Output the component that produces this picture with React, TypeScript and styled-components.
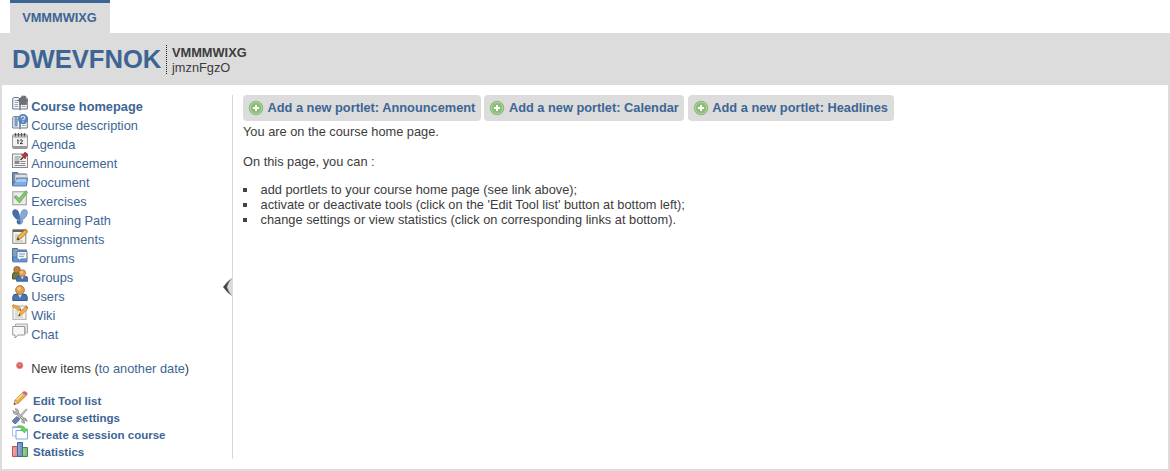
import React from "react";
import styled, { createGlobalStyle } from "styled-components";

const BLUE = "#3d6594";
const GREY = "#dcdcdc";

const GlobalStyle = createGlobalStyle`
  * { box-sizing: border-box; }
  body {
    margin: 0;
    background: #fff;
    color: #3c3c3c;
    font: 12.8px/15px "Liberation Sans", Arial, sans-serif;
  }
  a { color: ${BLUE}; text-decoration: none; }
`;

const Page = styled.div`
  display: flex;
  flex-direction: column;
  height: 471px;
  width: 1170px;
`;
const TabBar = styled.nav`
  display: flex;
  flex: none;
  height: 33px;
  padding-left: 10px;
`;
const Tab = styled.a`
  width: 100px;
  border-top: 3px solid ${BLUE};
  background: ${GREY};
  padding-right: 1px;
  text-align: center;
  font-weight: bold;
  line-height: 29px;
`;
const Banner = styled.header`
  display: flex;
  flex: none;
  height: 52px;
  padding: 12px 0 0 12px;
  background: ${GREY};
`;
const Title = styled.h1`
  margin: 0;
  width: 154px;
  font-size: 25.6px;
  line-height: 28px;
  color: ${BLUE};
  white-space: nowrap;
`;
const CourseInfo = styled.div`
  height: 29px;
  border-left: 1px dotted #222;
  padding-left: 5px;
  white-space: nowrap;
`;
const Frame = styled.main`
  flex: 1;
  display: flex;
  border: 2px solid ${GREY};
  border-top: 0;
  padding: 10px;
`;
const Sidebar = styled.aside`
  flex: none;
  width: 221px;
`;
const Divider = styled.div`
  position: relative;
  flex: none;
  width: 1px;
  margin-left: -1px;
  background: #d8d8d8;
`;
const Collapse = styled.svg`
  position: absolute;
  right: 0;
  top: 182px;
`;
const ToolRow = styled.a<{ $active?: boolean }>`
  display: flex;
  gap: 3.2px;
  height: 19px;
  line-height: 23px;
  white-space: nowrap;
  font-weight: ${(p) => (p.$active ? "bold" : "normal")};
`;
const NewItems = styled.p`
  display: flex;
  margin: 19px 0 15px;
  height: 15px;
  white-space: pre;
`;
const NewDot = styled.svg`
  margin-right: 3.2px;
`;
const AdminRow = styled.a`
  display: flex;
  gap: 5px;
  height: 17px;
  font-size: 11.52px;
  font-weight: bold;
  line-height: 21px;
  white-space: nowrap;
`;
const Icon = styled.svg`
  flex: none;
  width: 16px;
  height: 16px;
`;
const Content = styled.section`
  flex: 1;
  padding-left: 10px;
`;
const Portlets = styled.div`
  display: flex;
`;
const PortletButton = styled.a<{ $w: number }>`
  display: flex;
  align-items: center;
  width: ${(p) => p.$w}px;
  height: 26px;
  margin-right: 3.4px;
  padding: 0 0 1px 5px;
  border-radius: 4px;
  background: ${GREY};
  font-weight: bold;
  white-space: nowrap;
  gap: 3.5px;
`;
const Text = styled.p`
  margin: 3px 0 15px;
`;
const List = styled.ul`
  list-style: none;
  margin: -2px 0 0;
  padding: 0;
`;
const Item = styled.li`
  display: flex;
  align-items: center;
  gap: 13.6px;
  &::before {
    content: "";
    width: 4px;
    height: 4px;
    background: #444;
  }
`;

const book = (
  <>
    <path d="M.7 3.5 2 2.5h4.5L8 4l1.500-1.500H14l1.300 1V14H9.500L8 15l-1.500-1H.7z" fill="#f5f6f7" stroke="#68788c" />
    <path d="M8 4v10" stroke="#54708f" strokeWidth="1.500" />
    <path d="M2.500 5.500h3.500M2.500 7.500h3.500M2.500 9.500h3.500M2.500 11.500h3.500M10 9.500h3.500M10 11.500h3.500" stroke="#9aa5b2" />
  </>
);
const person = (
  <>
    <path d="M.8 15.500V12q0-3 3.700-3h7q3.700 0 3.700 3v3.500z" fill="#4a74b0" stroke="#34588e" />
    <path d="m6 9 2 4 2-4z" fill="#e4edf8" />
    <circle cx="8" cy="5" r="4.400" fill="#e5a04d" stroke="#a9662a" strokeWidth=".8" />
    <circle cx="7" cy="3.800" r="1.800" fill="#f5c98b" />
  </>
);
const pencil = (
  <>
    <path d="m5 12 1-3.500L13 1.500 15.500 4l-7 7z" fill="#f2b545" stroke="#8f6428" strokeWidth=".8" />
    <path d="m5 12 .8-2.400 1.700 1.700z" fill="#3b3027" />
  </>
);

const icons: Record<string, React.ReactNode> = {
  home: (
    <>
      {book}
      <path d="M6 5.200 10.800.5 12 1.700V1h1.500v2.200L16 5.500V6h-1.500v3.500H8V6H6z" fill="#707070" stroke="#5c5c5c" strokeWidth=".5" />
    </>
  ),
  description: (
    <>
      {book}
      <path d="M2.500 2.500h3v10h-3z" fill="#7c9cc5" />
      <circle cx="11" cy="5" r="4.700" fill="#5e88c2" stroke="#3f66a0" strokeWidth=".6" />
      <path d="M9.200 4q0-1.800 1.800-1.800T12.800 4Q12.700 5 11 5.500v.8M11 7.200v1.200" fill="none" stroke="#dce8f8" strokeWidth="1.100" />
    </>
  ),
  agenda: (
    <>
      <rect x=".5" y="1.500" width="15" height="14" rx="1" fill="#f2f2f2" stroke="#999" />
      <path d="M1 2h14v3H1z" fill="#c4c4c4" />
      <path d="M3.500 0v3.500M6.500 0v3.500M9.500 0v3.500M12.500 0v3.500" stroke="#555" strokeWidth="1.300" />
      <path d="M1 13h14v2.500H1z" fill="#999" />
      <path d="m5 7.500 1-.7V11M8 7.600q0-.8 1.200-.8t1.200 1Q10.300 8.800 8 10.600h2.800" fill="none" stroke="#333" />
    </>
  ),
  announcement: (
    <>
      <rect x=".5" y="2" width="15" height="13.500" fill="#f4f4f4" stroke="#888" />
      <path d="M2.500 5h7M2.500 7h5M8.500 9.500h5M8.500 11.500h5M2.500 13.500h11" stroke="#888" />
      <path d="M2.500 8.500h5v3.500h-5z" fill="#8a8a8a" />
      <path d="m8.500 8 3-3" stroke="#333" strokeWidth="1.300" />
      <path d="m9.500 2.800 2-.3L13 0l3 2.800-2.200 2-.5 2.200z" fill="#c92c32" stroke="#7c2024" strokeWidth=".6" />
    </>
  ),
  document: (
    <>
      <path d="M.5 14V1.500h5l1 1.500h8v11z" fill="#7890ae" stroke="#526e90" />
      <path d="M3 3.500h12V10H3z" fill="#e0e0e0" stroke="#999" strokeWidth=".6" />
      <path d="M4.500 7h11l-1 8H.5l1.500-4h2z" fill="#82ace0" stroke="#426fa9" strokeWidth=".8" />
      <path d="M5 8h9.500L14 11H3z" fill="#a9c8ee" />
    </>
  ),
  exercises: (
    <>
      <rect x=".8" y="1.800" width="13.500" height="13" fill="#ececec" stroke="#999" />
      <path d="m2 7 2.200-1.500L7 8.500 13.800.7l1.900 1.500L7.500 13z" fill="#83cb6c" stroke="#509c47" strokeWidth=".7" />
    </>
  ),
  path: (
    <>
      <path d="M.5 3.500Q.5.500 3.500.5q3 0 4 6l.6 4H5Q.8 7.500.5 3.500zM5 11.500h3.100q1 2.500-.5 3.700-1.800.4-2.600-1.700z" fill="#456fa8" stroke="#315a91" strokeWidth=".5" />
      <path d="M15.500 3Q15.200.5 12.500.5 9 .5 8.500 6.500l-.2 4H11q4.500-3 4.500-7.500zM8.300 11.500h2.700q-.2 3-2.500 3.800z" fill="#86a9d7" stroke="#456fa8" strokeWidth=".5" />
    </>
  ),
  assignments: (
    <>
      <rect x=".8" y="2" width="13" height="13.300" fill="#f5f4ef" stroke="#88847b" />
      <path d="M1 1.500h13V4H1z" fill="#686660" />
      <path d="M3 7h4M3 9h3M3 11h2M3 13h8" stroke="#b7b5ae" />
      {pencil}
      <path d="m12.500 2 1.200-1.200L16 3l-1.200 1.300z" fill="#d7812c" />
    </>
  ),
  forums: (
    <>
      <path d="M.5 14V1.500h5l1 1.500h8v11z" fill="#829dbe" stroke="#4e709b" />
      <path d="M1 10h14v5H1z" fill="#6797d1" stroke="#426fa9" strokeWidth=".7" />
      <path d="M5 4.500h10V12H9l-2.500 2V12H5z" fill="#f1f5fa" stroke="#597eaa" />
      <path d="M7 7h6M7 9.300h5" stroke="#8a9bb0" />
    </>
  ),
  groups: (
    <>
      <path d="M.5 13V9q0-3 3-3h4v7z" fill="#6d7b42" stroke="#4f5b30" />
      <circle cx="5" cy="3.700" r="3.300" fill="#b98342" stroke="#7e5429" strokeWidth=".7" />
      <g transform="translate(4 3.200) scale(.78)">{person}</g>
    </>
  ),
  users: person,
  wiki: (
    <>
      <rect x="1" y="2" width="13" height="13.300" fill="#f5f5f5" stroke="#aaa" />
      <path d="M3 7h4M3 9h3M3 11h3M3 13h8" stroke="#c2c2c2" />
      <path d="M0 2 1.500.5l6.500 3 1 3-3-.3z" fill="#f1ad45" stroke="#bd7124" strokeWidth=".6" />
      <path d="m6.500 12 1-3 6-6.500L16 4.500 9.500 11z" fill="#f2b545" stroke="#bd7124" strokeWidth=".7" />
      <path d="m6.500 12 .7-2 1.400 1.200zM9 6.500l-1.500-.2.8-1.200z" fill="#42352a" />
      <path d="m13 3 1.200-1.500L16 3v1.700z" fill="#d66b4c" />
    </>
  ),
  chat: (
    <>
      <path d="M3.500 1h12v9H13V4H3.500z" fill="#e8e8e8" stroke="#aaa" />
      <path d="M.7 3.500h12V12H6l-3 3v-3H.7z" fill="#f7f7f7" stroke="#999" />
    </>
  ),
  edit: (
    <>
      <path d="m2 13.500 1.200-4.500 7.500-7.500 3.500 3-7.700 7.500z" fill="#f3ae40" stroke="#a96c29" strokeWidth=".7" />
      <path d="m4.500 9 6.500-6.500" stroke="#ffe098" strokeWidth="1.300" />
      <path d="m2 13.500 1.100-4 3 2.600z" fill="#f2d7a6" stroke="#a98458" strokeWidth=".5" />
      <path d="m2 13.500.5-1.700 1.300 1.200z" fill="#333" />
      <path d="m9.500 2.700 1.200-1.200 3.500 3L13 5.700z" fill="#bbb" />
      <path d="m10.700 1.500 1-.9q1.600-.4 2.900 1t.2 2.400l-.6.500z" fill="#df694d" stroke="#b8533e" strokeWidth=".4" />
    </>
  ),
  settings: (
    <>
      <path d="m3.500 3.500 9.500 9.500" stroke="#777" strokeWidth="2.800" />
      <path d="m3.500 3.500 9.500 9.500" stroke="#ddd" strokeWidth="1.200" />
      <path d="M.8 2.500 3 4.300l1.500-1.500L3 .8q3-.3 3.600 2T4 6.500Q1.300 6.500.8 2.500zM15.200 13.500 13 11.700l-1.500 1.500 1.500 2q-3 .3-3.600-1.700L12 10q2.500-.3 3.200 3.500z" fill="#bbb" stroke="#777" strokeWidth=".6" />
      <path d="m6 10 7-8 2-1-1 2-7 8z" fill="#ccc" stroke="#888" strokeWidth=".7" />
      <path d="m.5 12.500 4.300-4 2.900 2.900-3.700 4q-1.200.6-2.500-.7T.5 12.500z" fill="#6481b1" stroke="#3d5784" strokeWidth=".7" />
    </>
  ),
  session: (
    <>
      <path d="M.5 2h10v9H.5z" fill="#fff" stroke="#a9c2e8" />
      <path d="M.5 1.500h10V3H.5z" fill="#86a9df" />
      <path d="M4 5.500h11.500V14H4z" fill="#fff" stroke="#82a5df" />
      <path d="M5 1q7-1.500 8.500 3H16l-3.500 4L8.500 4h2Q9 2 5 1z" fill="#63d654" stroke="#3bae38" strokeWidth=".5" />
    </>
  ),
  statistics: (
    <>
      <path d="M.5 4.500h5v10h-5z" fill="#ef8c8c" stroke="#c55050" />
      <path d="M5.500.5h5v14h-5z" fill="#6c94cd" stroke="#3866a5" />
      <path d="M10.500 5.500h5v9h-5z" fill="#87be87" stroke="#438949" />
      <path d="M1.500 6h1v7h-1zM6.500 2h1v11h-1zM11.500 7h1v6h-1z" fill="#fff" opacity=".35" />
    </>
  ),
};

const tools = [
  ["home", "Course homepage"],
  ["description", "Course description"],
  ["agenda", "Agenda"],
  ["announcement", "Announcement"],
  ["document", "Document"],
  ["exercises", "Exercises"],
  ["path", "Learning Path"],
  ["assignments", "Assignments"],
  ["forums", "Forums"],
  ["groups", "Groups"],
  ["users", "Users"],
  ["wiki", "Wiki"],
  ["chat", "Chat"],
];
const admin = [
  ["edit", "Edit Tool list"],
  ["settings", "Course settings"],
  ["session", "Create a session course"],
  ["statistics", "Statistics"],
];
const portlets: [string, number][] = [
  ["Announcement", 238],
  ["Calendar", 200],
  ["Headlines", 206],
];

const Glyph = ({ name }: { name: string }) => (
  <Icon viewBox="0 0 16 16" fill="none">{icons[name]}</Icon>
);

const AddIcon = () => (
  <Icon viewBox="0 0 16 16">
    <circle cx="8" cy="8" r="6.800" fill="#89bd73" stroke="#84b076" strokeWidth=".8" />
    <circle cx="8" cy="8" r="5.700" fill="none" stroke="#b4d8a4" strokeWidth=".9" />
    <path d="M8 4.900v6.200M4.900 8h6.200" stroke="#fff" strokeWidth="2" />
  </Icon>
);

export default function App() {
  return (
    <Page>
      <GlobalStyle />
      <TabBar><Tab>VMMMWIXG</Tab></TabBar>
      <Banner>
        <Title><a>DWEVFNOK</a></Title>
        <CourseInfo><b>VMMMWIXG</b><br />jmznFgzO</CourseInfo>
      </Banner>
      <Frame>
        <Sidebar>
          {tools.map(([icon, label], i) => (
            <ToolRow key={icon} $active={i === 0}><Glyph name={icon} />{label}</ToolRow>
          ))}
          <NewItems>
            <NewDot width="16" height="15" viewBox="0 0 16 15">
              <circle cx="7.700" cy="4.500" r="3.200" fill="#d95858" stroke="#e99a9a" />
              <circle cx="7.700" cy="4" r="1.200" fill="#ee8c8c" />
            </NewDot>
            New items (<a>to another date</a>)
          </NewItems>
          {admin.map(([icon, label]) => (
            <AdminRow key={icon}><Glyph name={icon} />{label}</AdminRow>
          ))}
        </Sidebar>
        <Divider>
          <Collapse width="11" height="20" viewBox="0 0 11 20">
            <path d="M11 .5 5 5v10l6 4.500z" fill="#dcdcdc" />
            <path d="M9.500 1.500Q4.500 5 1 10q3.500 5 8.500 8.500Q6 14 5 10 6 6 9.500 1.500z" fill="#444" stroke="#999" strokeWidth=".4" />
          </Collapse>
        </Divider>
        <Content>
          <Portlets>
            {portlets.map(([name, width]) => (
              <PortletButton key={name} $w={width}><AddIcon />Add a new portlet: {name}</PortletButton>
            ))}
          </Portlets>
          <Text>You are on the course home page.</Text>
          <Text>On this page, you can :</Text>
          <List>
            <Item>add portlets to your course home page (see link above);</Item>
            <Item>activate or deactivate tools (click on the 'Edit Tool list' button at bottom left);</Item>
            <Item>change settings or view statistics (click on corresponding links at bottom).</Item>
          </List>
        </Content>
      </Frame>
    </Page>
  );
}
